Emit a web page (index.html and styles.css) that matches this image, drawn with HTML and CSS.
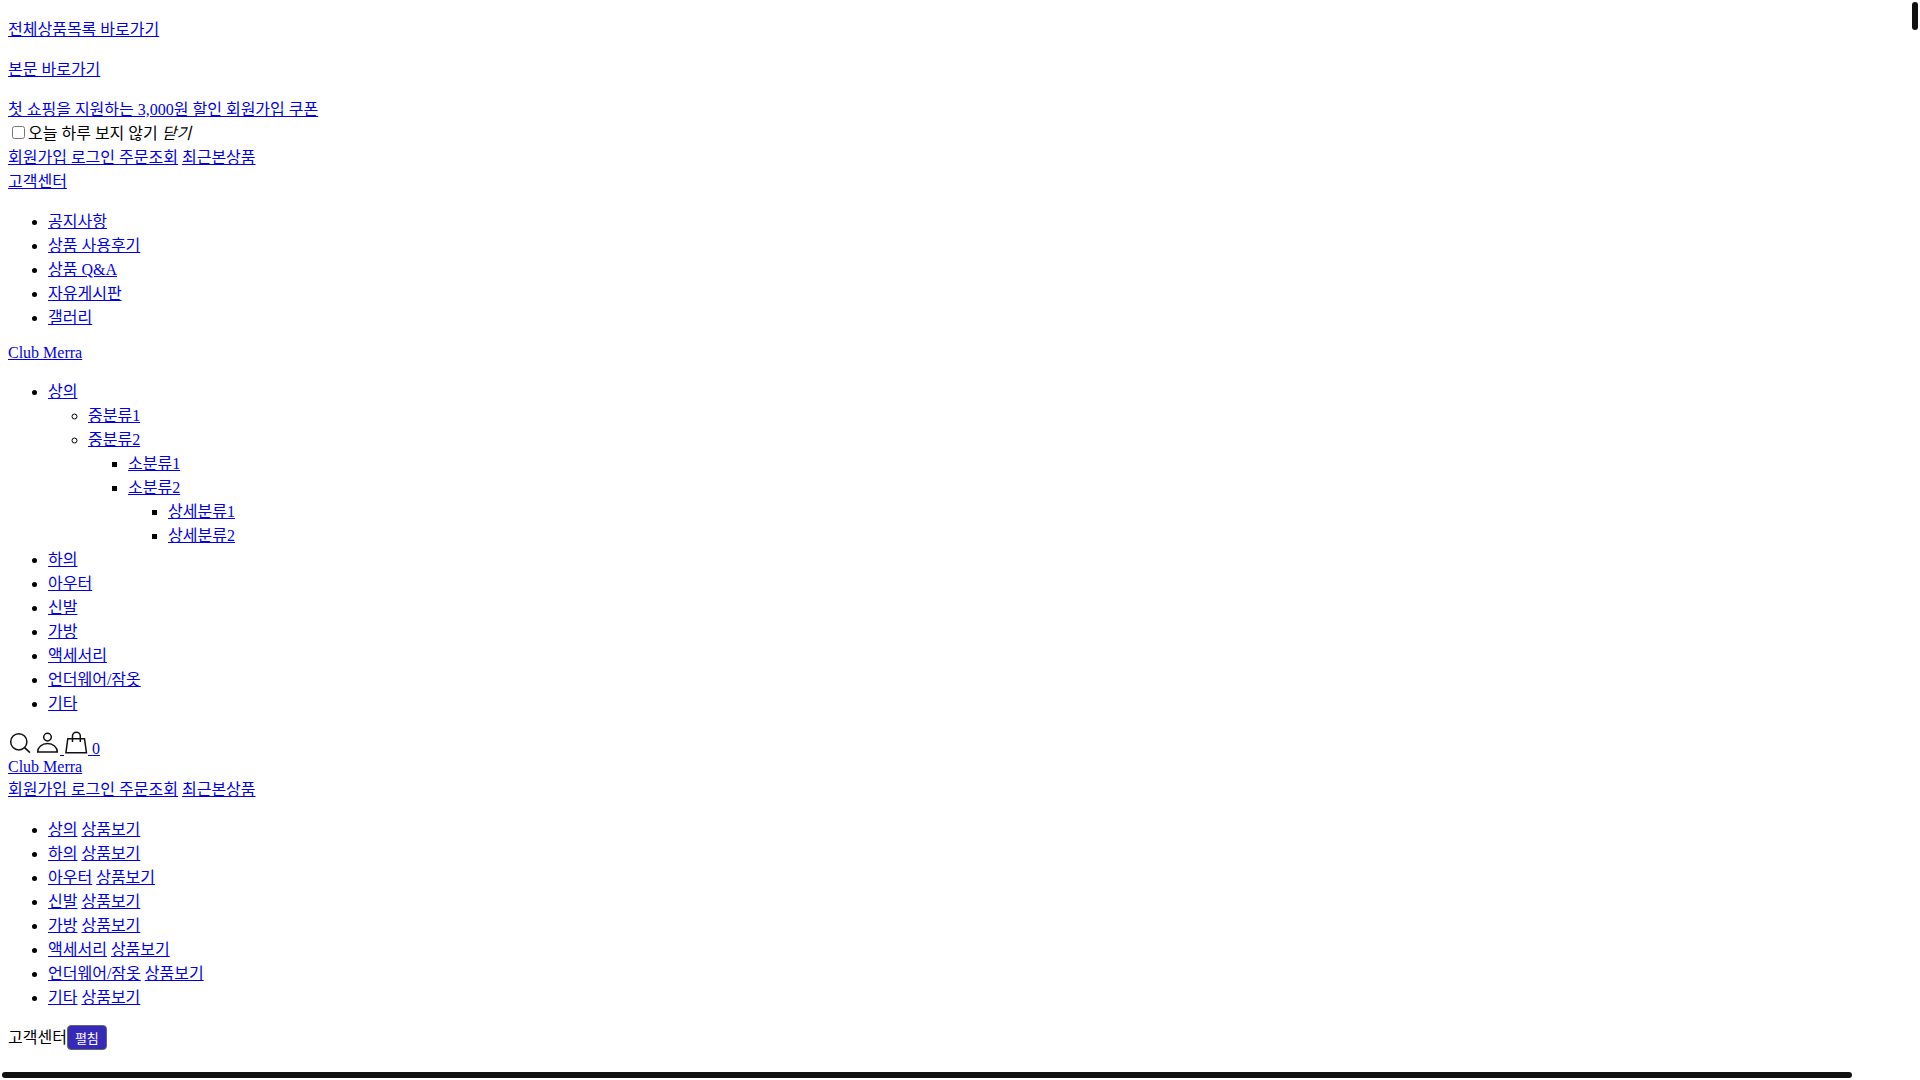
FILE: index.html
```html
<!DOCTYPE html>
<html lang="ko">
<head>
    <meta charset="UTF-8">
    <meta name="viewport" content="width=device-width, initial-scale=1.0">
    <title>Club Merra</title>
    <link rel="stylesheet" href="styles.css">
</head>
<body>
    <p><a href="#category">전체상품목록 바로가기</a></p>
    <p><a href="#contents">본문 바로가기</a></p>

    <div class="top-banner">
        <a href="#join">첫 쇼핑을 지원하는 3,000원 할인 회원가입 쿠폰</a>
        <div>
            <input type="checkbox" id="todayClose"><label for="todayClose">오늘 하루 보지 않기</label>
            <i>닫기</i>
        </div>
    </div>

    <header>
        <div class="top-menu">
            <a href="#join">회원가입 </a><a href="#login">로그인 </a><a href="#order">주문조회</a>
            <a href="#recent">최근본상품</a>
            <div class="customer">
                <a href="#customer">고객센터</a>
                <ul>
                    <li><a href="#notice">공지사항</a></li>
                    <li><a href="#review">상품 사용후기</a></li>
                    <li><a href="#qna">상품 Q&amp;A</a></li>
                    <li><a href="#free">자유게시판</a></li>
                    <li><a href="#gallery">갤러리</a></li>
                </ul>
            </div>
        </div>

        <div class="logo"><a href="#home">Club Merra</a></div>

        <nav id="category">
            <ul>
                <li><a href="#top">상의</a>
                    <ul>
                        <li><a href="#mid1">중분류1</a></li>
                        <li><a href="#mid2">중분류2</a>
                            <ul>
                                <li><a href="#small1">소분류1</a></li>
                                <li><a href="#small2">소분류2</a>
                                    <ul>
                                        <li><a href="#detail1">상세분류1</a></li>
                                        <li><a href="#detail2">상세분류2</a></li>
                                    </ul>
                                </li>
                            </ul>
                        </li>
                    </ul>
                </li>
                <li><a href="#bottom">하의</a></li>
                <li><a href="#outer">아우터</a></li>
                <li><a href="#shoes">신발</a></li>
                <li><a href="#bag">가방</a></li>
                <li><a href="#acc">액세서리</a></li>
                <li><a href="#underwear">언더웨어/잠옷</a></li>
                <li><a href="#etc">기타</a></li>
            </ul>
        </nav>

        <div class="icons">
            <a href="#search" aria-label="검색"><svg class="icon" viewBox="0 0 24 24"><circle cx="10.8" cy="11.8" r="8.1"/><path d="M16.6 17.6l5.3 5"/></svg></a>
            <a href="#mypage" aria-label="마이페이지"><svg class="icon" viewBox="0 0 24 24"><circle cx="11.5" cy="7.1" r="3.8"/><path d="M1.7 22.1C1.7 17.2 5.8 13.5 11.5 13.5S21.3 17.2 21.3 22.1z"/></svg> </a><a href="#cart" aria-label="장바구니 0"><svg class="icon" viewBox="0 0 24 24"><path d="M3.8 8.7h16.7l2 14.1H1.9z"/><path d="M8.5 12.1V6.1a3.9 3.9 0 0 1 7.8 0v6"/></svg> 0</a>
        </div>
    </header>

    <aside id="contents">
        <div class="logo"><a href="#home">Club Merra</a></div>
        <div>
            <a href="#join">회원가입 </a><a href="#login">로그인 </a><a href="#order">주문조회</a>
            <a href="#recent">최근본상품</a>
        </div>
        <ul>
            <li><a href="#top">상의</a> <a href="#top-list">상품보기</a></li>
            <li><a href="#bottom">하의</a> <a href="#bottom-list">상품보기</a></li>
            <li><a href="#outer">아우터</a> <a href="#outer-list">상품보기</a></li>
            <li><a href="#shoes">신발</a> <a href="#shoes-list">상품보기</a></li>
            <li><a href="#bag">가방</a> <a href="#bag-list">상품보기</a></li>
            <li><a href="#acc">액세서리</a> <a href="#acc-list">상품보기</a></li>
            <li><a href="#underwear">언더웨어/잠옷</a> <a href="#underwear-list">상품보기</a></li>
            <li><a href="#etc">기타</a> <a href="#etc-list">상품보기</a></li>
        </ul>
        <div>고객센터<button type="button" class="btn-open">펼침</button></div>
    </aside>

    <div class="scroll-thumb scroll-y"></div>
    <div class="scroll-thumb scroll-x"></div>
</body>
</html>
```
FILE: styles.css
```css
body {
    margin: 0 8px;
    background-color: #fff;
    color: #000;
    font-family: "Liberation Serif", "Noto Sans CJK KR", serif;
    font-size: 16px;
}
p {
    margin: 16px 0;
}
a {
    color: #0000ee;
}
.icon {
    width: 24px;
    height: 24px;
    fill: none;
    stroke: #111;
    stroke-width: 1.5;
}
.btn-open {
    padding: 2px 7px;
    border: 1px solid #666;
    border-radius: 4px;
    background-color: #3629b7;
    color: #fff;
    font-family: "Liberation Sans", "Noto Sans CJK KR", sans-serif;
    font-size: 13px;
}

/* overlay scroll bars */
.scroll-thumb {
    position: fixed;
    border-radius: 3px;
    background-color: #111;
}
.scroll-y {
    top: 2px;
    right: 2px;
    width: 6px;
    height: 28px;
}
.scroll-x {
    left: 2px;
    right: 68px;
    bottom: 2px;
    height: 6px;
}
```
